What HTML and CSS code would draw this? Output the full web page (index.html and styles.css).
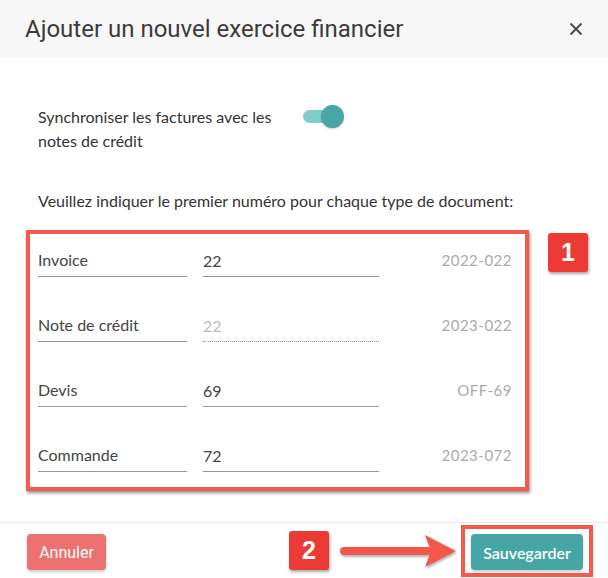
FILE: index.html
```html
<!DOCTYPE html>
<html lang="fr">
<head>
    <meta charset="UTF-8">
    <title>Ajouter un nouvel exercice financier</title>
    <link rel="stylesheet" href="styles.css">
</head>
<body>
    <div class="modal">
        <div class="modal-header">
            <h1>Ajouter un nouvel exercice financier</h1>
            <button class="close" type="button" aria-label="Fermer">
                <svg width="14" height="14" viewBox="0 0 14 14"><path d="M1.5 1.5 L12.5 12.5 M12.5 1.5 L1.5 12.5" stroke="#444" stroke-width="1.8" fill="none"/></svg>
            </button>
        </div>

        <div class="modal-body">
            <div class="sync-row">
                <p class="sync-label">Synchroniser les factures avec les notes de crédit</p>
                <span class="toggle"><span class="knob"></span></span>
            </div>

            <p class="hint">Veuillez indiquer le premier numéro pour chaque type de document:</p>

            <div class="numbers">
                <div class="num-row">
                    <div class="field label-field">Invoice</div>
                    <input class="field value-field" type="text" value="22">
                    <span class="preview">2022-022</span>
                </div>
                <div class="num-row">
                    <div class="field label-field">Note de crédit</div>
                    <input class="field value-field disabled" type="text" value="22" disabled>
                    <span class="preview">2023-022</span>
                </div>
                <div class="num-row">
                    <div class="field label-field">Devis</div>
                    <input class="field value-field" type="text" value="69">
                    <span class="preview">OFF-69</span>
                </div>
                <div class="num-row">
                    <div class="field label-field">Commande</div>
                    <input class="field value-field" type="text" value="72">
                    <span class="preview">2023-072</span>
                </div>
            </div>
        </div>

        <div class="modal-footer">
            <button class="btn btn-cancel" type="button">Annuler</button>
            <div class="highlight">
                <button class="btn btn-save" type="button">Sauvegarder</button>
            </div>
        </div>

        <span class="badge badge-1">1</span>
        <span class="badge badge-2">2</span>
        <svg class="arrow" width="124" height="36" viewBox="0 0 124 36">
            <rect x="4" y="14" width="92" height="8" rx="4" fill="#f2574a"/>
            <polygon points="89,2 120,18 89,34 95,18" fill="#f2574a"/>
        </svg>
    </div>
</body>
</html>
```

FILE: styles.css
```css
body {
    margin: 0;
    padding: 0;
    background-color: white;
    font-family: 'Lato', sans-serif;
    color: #333;
}
.modal {
    position: relative;
    width: 608px;
    height: 578px;
    overflow: hidden;
}
.modal-header {
    height: 58px;
    background-color: #f7f7f7;
    padding: 0 22px 0 25px;
    display: flex;
    align-items: center;
    justify-content: space-between;
}
h1 {
    margin: 0;
    font-family: 'Roboto', sans-serif;
    font-weight: 400;
    font-size: 24px;
    color: #3b3b3b;
}
.close {
    border: none;
    background: none;
    padding: 0;
    width: 20px;
    height: 20px;
    display: flex;
    align-items: center;
    justify-content: center;
}
.modal-body {
    padding: 47px 79px 31px 26px;
}
.sync-row {
    display: flex;
    align-items: flex-start;
    padding-left: 12px;
}
.sync-label {
    margin: 0;
    width: 250px;
    font-size: 16px;
    line-height: 24px;
}
.toggle {
    position: relative;
    margin: 5px 0 0 15px;
    width: 38px;
    height: 13px;
    border-radius: 7px;
    background-color: #80cdc9;
}
.knob {
    position: absolute;
    right: -3px;
    top: -5px;
    width: 23px;
    height: 23px;
    border-radius: 50%;
    background-color: #48a7a5;
    box-shadow: 0 1px 2px rgba(0, 0, 0, 0.2);
}
.hint {
    margin: 36px 0 17px 12px;
    font-size: 16px;
    line-height: 24px;
}
.numbers {
    border: 4px solid #f45b4e;
    box-shadow: 1px 2px 3px rgba(0, 0, 0, 0.45);
    padding: 16px 13px 15px 8px;
    display: flex;
    flex-direction: column;
    gap: 38px;
}
.num-row {
    display: flex;
    align-items: flex-start;
}
.field {
    box-sizing: border-box;
    height: 27px;
    padding: 0 0 6px 0;
    font-family: 'Lato', sans-serif;
    font-size: 16px;
    line-height: 20px;
    color: #444;
    border: none;
    border-bottom: 1px solid #999;
}
.label-field {
    width: 149px;
}
.value-field {
    width: 176px;
    margin-left: 16px;
    background: none;
    outline: none;
}
.value-field.disabled {
    color: #bbb;
    border-bottom: 1px dotted #999;
}
.preview {
    margin-left: auto;
    font-size: 15px;
    line-height: 20px;
    color: #aaa;
    letter-spacing: 0.5px;
}
.modal-footer {
    border-top: 1px solid #e8e8e8;
    padding: 11px 15px 0 27px;
    display: flex;
    align-items: flex-start;
    justify-content: space-between;
}
.btn {
    height: 36px;
    border: none;
    border-radius: 4px;
    color: white;
    font-size: 16px;
    box-shadow: 0 2px 3px rgba(0, 0, 0, 0.2);
    cursor: pointer;
}
.btn-cancel {
    width: 79px;
    background-color: #ed7171;
    font-family: 'Roboto', sans-serif;
}
.highlight {
    margin-top: -9px;
    border: 4px solid #f45b4e;
    padding: 5px 6px 3px 6px;
}
.btn-save {
    width: 112px;
    background-color: #46a6a6;
    font-family: 'Lato', sans-serif;
    font-weight: 600;
}
.badge {
    position: absolute;
    width: 40px;
    height: 39px;
    border-radius: 3px;
    background-color: #ec3b35;
    color: white;
    font-family: 'Liberation Sans', sans-serif;
    font-weight: bold;
    font-size: 25px;
    line-height: 39px;
    text-align: center;
    box-shadow: 1px 2px 3px rgba(0, 0, 0, 0.35);
}
.badge-1 {
    left: 548px;
    top: 233px;
}
.badge-2 {
    left: 289px;
    top: 531px;
}
.arrow {
    position: absolute;
    left: 336px;
    top: 533px;
    filter: drop-shadow(1px 2px 1px rgba(0, 0, 0, 0.3));
}
```
